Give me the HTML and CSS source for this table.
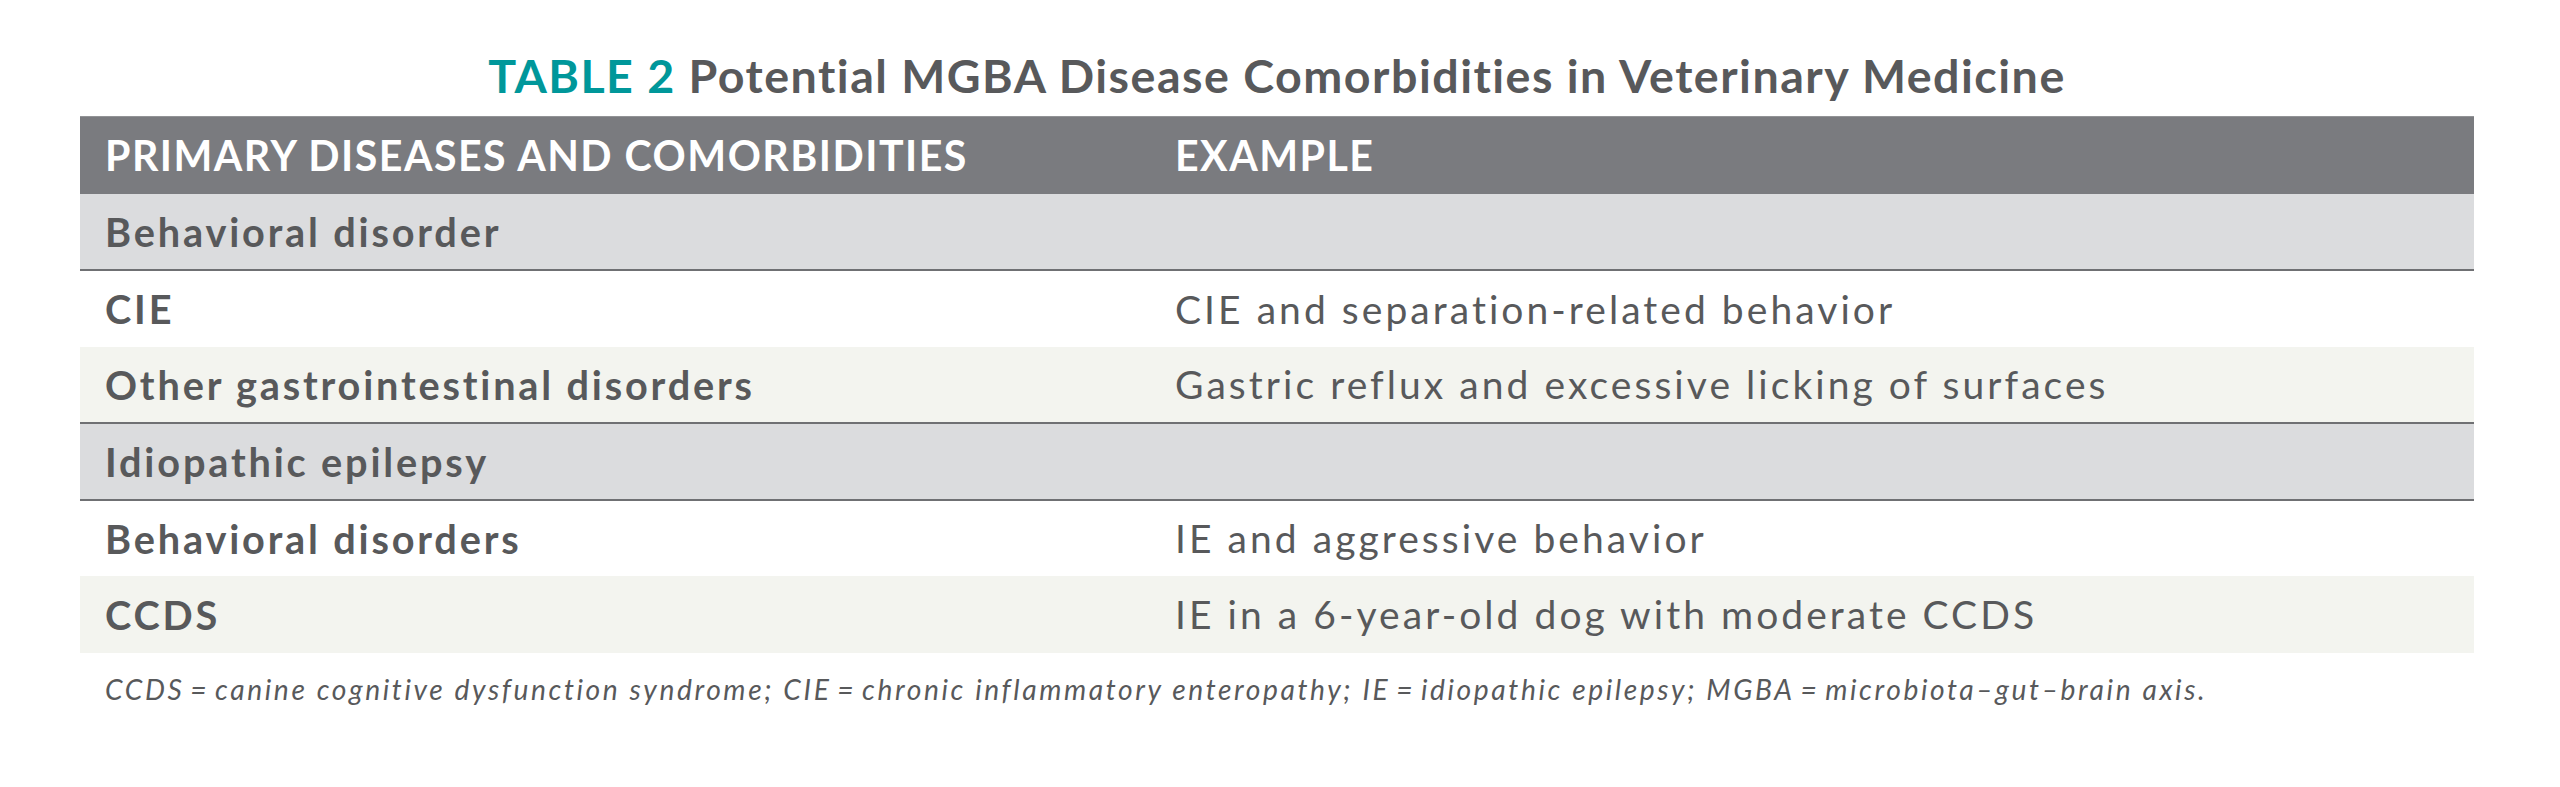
FILE: index.html
```html
<!DOCTYPE html>
<html lang="en">
<head>
<meta charset="utf-8">
<title>Table 2</title>
<link rel="stylesheet" href="styles.css">
</head>
<body>
<div class="page">
  <h1 class="title"><span class="label">TABLE 2</span> Potential MGBA Disease Comorbidities in Veterinary Medicine</h1>
  <table class="tbl">
    <thead>
      <tr><th class="c1">PRIMARY DISEASES AND COMORBIDITIES</th><th class="c2">EXAMPLE</th></tr>
    </thead>
    <tbody>
      <tr class="group"><td colspan="2">Behavioral disorder</td></tr>
      <tr><td class="name">CIE</td><td class="ex">CIE and separation-related behavior</td></tr>
      <tr class="alt"><td class="name">Other gastrointestinal disorders</td><td class="ex">Gastric reflux and excessive licking of surfaces</td></tr>
      <tr class="group sep"><td colspan="2">Idiopathic epilepsy</td></tr>
      <tr><td class="name">Behavioral disorders</td><td class="ex">IE and aggressive behavior</td></tr>
      <tr class="alt"><td class="name">CCDS</td><td class="ex">IE in a 6-year-old dog with moderate CCDS</td></tr>
    </tbody>
  </table>
  <p class="note">CCDS&#8201;=&#8201;canine cognitive dysfunction syndrome; CIE&#8201;=&#8201;chronic inflammatory enteropathy; IE&#8201;=&#8201;idiopathic epilepsy; MGBA&#8201;=&#8201;microbiota–gut–brain axis.</p>
</div>
</body>
</html>
```
FILE: styles.css
```css
html, body {
  margin: 0;
  padding: 0;
  background: #ffffff;
}
body {
  font-family: "Lato", "Noto Sans", sans-serif;
  color: #58595b;
}
.page {
  width: 2394px;
  margin-left: 80px;
}
.title {
  margin: 0 0 12px 0;
  padding-top: 47px;
  font-size: 46.6px;
  line-height: 57px;
  font-weight: 700;
  letter-spacing: 1.49px;
  text-align: center;
  color: #58595b;
}
.label {
  color: #00979a;
}
.tbl {
  width: 2394px;
  border-collapse: collapse;
  table-layout: fixed;
}
.tbl th, .tbl td {
  padding: 0 0 0 25px;
  text-align: left;
  vertical-align: middle;
  height: 76.5px;
  box-sizing: border-box;
  white-space: nowrap;
}
.tbl th {
  background: #7a7b7f;
  color: #ffffff;
  font-weight: 700;
  font-size: 41.1px;
  letter-spacing: 1.49px;
  height: 77px;
  border-top: 1px solid #929396;
}
.c1 { width: 1070px; }
.tbl td {
  font-size: 39.7px;
  letter-spacing: 2.82px;
}
.group td {
  background: #dbdcde;
  font-weight: 700;
  border-bottom: 2px solid #6f7073;
}
.group.sep td {
  border-top: 2px solid #6f7073;
}
.alt td {
  background: #f3f4ef;
}
.name {
  font-weight: 700;
}
.tbl td.ex {
  font-weight: 400;
  font-size: 39px;
  letter-spacing: 3.05px;
}
.note {
  margin: 20px 0 0 25px;
  font-style: italic;
  font-size: 28.2px;
  letter-spacing: 2.6px;
  line-height: 33.6px;
}
```
